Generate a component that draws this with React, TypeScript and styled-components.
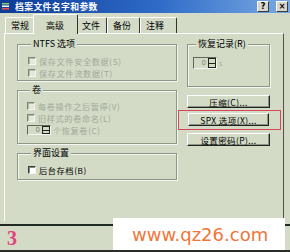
import React from "react";
import styled, { createGlobalStyle } from "styled-components";

const BG = "#d3dbc6";
const SHADE = "#8d9687";
const LIGHT = "#f4f7ef";
const DIM = "#a2a99a";
const DARK = "#2e362e";
const CJK = `"Noto Sans CJK SC", "DejaVu Sans", sans-serif`;

const GlobalStyle = createGlobalStyle`
    html, body { margin: 0; padding: 0; }
    body { width: 290px; height: 252px; overflow: hidden; background: ${BG}; }
`;

const Window = styled.div`
    position: relative;
    width: 290px;
    height: 252px;
    display: flex;
    flex-direction: column;
    background: ${BG};
    font-family: ${CJK};
    font-size: 9px;
    overflow: hidden;
`;

const TitleBar = styled.div`
    height: 13px;
    flex: none;
    display: flex;
    align-items: center;
    gap: 5px;
    padding: 0 2px 0 1px;
    background: linear-gradient(to right, #0c3a98, #2f6cc8 55%, #7aa9e3);
    color: #fff;
`;

const TitleText = styled.span`
    flex: 1;
    font-size: 8.8px;
    letter-spacing: 0.4px;
    font-weight: 700;
    line-height: 13px;
`;

const TitleButton = styled.span`
    width: 10px;
    height: 9px;
    display: flex;
    align-items: center;
    justify-content: center;
    margin-left: 2px;
    background: #d8d6ce;
    border: 1px solid;
    border-color: #fff #3a3a3a #3a3a3a #fff;
    color: #000;
    font-family: "DejaVu Sans", sans-serif;
    font-size: 8px;
    font-weight: 700;
    line-height: 9px;
`;

const TabStrip = styled.div`
    height: 20px;
    flex: none;
    display: flex;
    align-items: flex-end;
    padding-left: 5px;
`;

const Tab = styled.div<{ $w: number; $active?: boolean }>`
    position: relative;
    width: ${(p) => p.$w}px;
    height: ${(p) => (p.$active ? 20 : 16)}px;
    margin: ${(p) => (p.$active ? "0 -2px -1px -2px" : "0")};
    z-index: ${(p) => (p.$active ? 1 : 0)};
    box-sizing: border-box;
    padding-left: ${(p) => (p.$active ? 12 : 5)}px;
    padding-top: ${(p) => (p.$active ? 5 : 2)}px;
    border-top: 1px solid #fff;
    border-left: 1px solid #fff;
    border-right: 1px solid ${DARK};
    border-radius: 2px 2px 0 0;
    background: ${BG};
    line-height: 11px;
    color: #000;
`;

const Panel = styled.div`
    height: 188px;
    flex: none;
    box-sizing: border-box;
    margin: 0 6px 0 4px;
    display: flex;
    gap: 10px;
    padding: 5px 0 0 12px;
    border-top: 1px solid #fff;
    border-left: 1px solid #fff;
    border-right: 1px solid #4c544c;
`;

const Column = styled.div<{ $w: number }>`
    width: ${(p) => p.$w}px;
    display: flex;
    flex-direction: column;
`;

const Group = styled.fieldset<{ $top?: number; $pad: string }>`
    margin: ${(p) => p.$top ?? 0}px 0 0 0;
    padding: ${(p) => p.$pad};
    min-width: 0;
    border: 1px solid ${SHADE};
    box-shadow: inset 1px 1px 0 ${LIGHT}, 1px 1px 0 ${LIGHT};
    display: flex;
    flex-direction: column;
`;

const Legend = styled.legend`
    margin-left: 3px;
    padding: 0 2px;
    line-height: 10px;
    background: ${BG};
    color: #000;
`;

const CheckRow = styled.div<{ $dim?: boolean }>`
    height: 12px;
    display: flex;
    align-items: center;
    gap: 3px;
    font-size: 8.2px;
    letter-spacing: 0.6px;
    line-height: 12px;
    color: ${(p) => (p.$dim ? DIM : "#000")};
    white-space: nowrap;
`;

const Box = styled.span<{ $dim?: boolean }>`
    width: 8px;
    height: 8px;
    flex: none;
    box-sizing: border-box;
    border: 1px solid;
    border-color: ${(p) => (p.$dim ? "#7c8476" : "#3a423a")} ${LIGHT} ${LIGHT}
        ${(p) => (p.$dim ? "#7c8476" : "#3a423a")};
    box-shadow: inset 1px 1px 0 ${(p) => (p.$dim ? "#b4bbac" : "#808880")};
    background: ${(p) => (p.$dim ? "#e4e9dd" : "#fff")};
`;

const SpinRow = styled.div<{ $dim?: boolean; $h: number }>`
    height: ${(p) => p.$h}px;
    display: flex;
    align-items: center;
    gap: 2px;
    font-size: 8.2px;
    letter-spacing: 0.6px;
    line-height: ${(p) => p.$h}px;
    color: ${(p) => (p.$dim ? DIM : "#000")};
    white-space: nowrap;
`;

const SpinField = styled.span<{ $w: number; $h: number }>`
    width: ${(p) => p.$w}px;
    height: ${(p) => p.$h}px;
    flex: none;
    box-sizing: border-box;
    display: flex;
    align-items: center;
    border: 1px solid;
    border-color: #5e665a ${LIGHT} ${LIGHT} #5e665a;
    background: ${BG};
`;

const SpinValue = styled.span`
    flex: 1;
    text-align: right;
    padding-right: 2px;
    color: #7e8678;
    font-family: "DejaVu Sans", sans-serif;
    font-size: 7px;
    letter-spacing: 0;
    line-height: 8px;
`;

const SpinArrows = styled.span`
    width: 8px;
    height: 100%;
    flex: none;
    box-sizing: border-box;
    display: flex;
    flex-direction: column;
    border: 1px solid #1e241e;
`;

const SpinHalf = styled.span`
    flex: 1;
    border-bottom: 1px solid #1e241e;
    &:last-child { border-bottom: none; }
`;

const Unit = styled.span`
    font-size: 7px;
    color: ${DIM};
`;

const PushButton = styled.button<{ $mt?: number }>`
    display: block;
    width: 100%;
    height: 13px;
    margin-top: ${(p) => p.$mt ?? 0}px;
    padding: 0;
    box-sizing: border-box;
    border: 1px solid;
    border-color: #fff #1e241e #1e241e #fff;
    box-shadow: inset -1px -1px 0 ${SHADE};
    background: ${BG};
    font-family: ${CJK};
    font-size: 8.5px;
    letter-spacing: 0.4px;
    line-height: 10px;
    color: #000;
`;

const Highlight = styled.div`
    margin: 2px -11px 0 -9px;
    padding: 2px 11px 3px 9px;
    border: 1px solid #d84656;
`;

const Gap = styled.div<{ $h: number }>`
    height: ${(p) => p.$h}px;
    flex: none;
`;

const Rule = styled.div<{ $h: number; $c: string }>`
    height: ${(p) => p.$h}px;
    flex: none;
    background: ${(p) => p.$c};
`;

const Caption = styled.div`
    height: 24px;
    flex: none;
    display: flex;
    align-items: center;
    padding-left: 7px;
    font-family: "Liberation Serif", serif;
    font-weight: 700;
    font-size: 20px;
    color: #e2407a;
`;

const Watermark = styled.div`
    position: absolute;
    left: 113px;
    top: 218px;
    width: 172px;
    height: 32px;
    box-sizing: border-box;
    display: flex;
    align-items: flex-end;
    padding: 0 0 5px 19px;
    background: #fff;
    font-family: "DejaVu Sans", sans-serif;
    font-size: 18px;
    line-height: 20px;
    color: #ef763a;
`;

const AppIcon = () => (
    <svg width="9" height="9" viewBox="0 0 9 9">
        <rect x="0" y="0" width="9" height="9" fill="#1d3f8a" />
        <rect x="1" y="1" width="7" height="1.5" fill="#6fd070" />
        <rect x="1" y="3.5" width="7" height="1.5" fill="#ffffff" />
        <rect x="1" y="6" width="7" height="1.5" fill="#e05050" />
    </svg>
);

const Spinner = ({ w, h }: { w: number; h: number }) => (
    <SpinField $w={w} $h={h}>
        <SpinValue>0</SpinValue>
        <SpinArrows>
            <SpinHalf />
            <SpinHalf />
        </SpinArrows>
    </SpinField>
);

const tabs = [
    { label: "常规", w: 30 },
    { label: "高级", w: 45, active: true },
    { label: "文件", w: 31 },
    { label: "备份", w: 33 },
    { label: "注释", w: 37 },
];

const App = () => {
    return (
        <>
            <GlobalStyle />
            <Window>
                <TitleBar>
                    <AppIcon />
                    <TitleText>档案文件名字和参数</TitleText>
                    <TitleButton>?</TitleButton>
                    <TitleButton>×</TitleButton>
                </TitleBar>
                <TabStrip>
                    {tabs.map((t) => (
                        <Tab key={t.label} $w={t.w} $active={t.active}>
                            {t.label}
                        </Tab>
                    ))}
                </TabStrip>
                <Panel>
                    <Column $w={160}>
                        <Group $pad="6px 0 1px 10px">
                            <Legend>NTFS 选项</Legend>
                            <CheckRow $dim>
                                <Box $dim />
                                保存文件安全数据(S)
                            </CheckRow>
                            <CheckRow $dim>
                                <Box $dim />
                                保存文件流数据(T)
                            </CheckRow>
                        </Group>
                        <Group $top={4} $pad="5px 0 7px 9px">
                            <Legend>卷</Legend>
                            <CheckRow $dim>
                                <Box $dim />
                                每卷操作之后暂停(V)
                            </CheckRow>
                            <CheckRow $dim>
                                <Box $dim />
                                旧样式的卷命名(L)
                            </CheckRow>
                            <SpinRow $dim $h={12}>
                                <Spinner w={24} h={10} />
                                个恢复卷(C)
                            </SpinRow>
                        </Group>
                        <Group $top={4} $pad="6px 0 3px 10px">
                            <Legend>界面设置</Legend>
                            <CheckRow>
                                <Box />
                                后台存档(B)
                            </CheckRow>
                        </Group>
                    </Column>
                    <Column $w={83}>
                        <Group $pad="8px 0 17px 5px">
                            <Legend>恢复记录(R)</Legend>
                            <SpinRow $h={12}>
                                <Spinner w={24} h={12} />
                                <Unit>s</Unit>
                            </SpinRow>
                        </Group>
                        <PushButton $mt={8}>压缩(C)...</PushButton>
                        <Highlight>
                            <PushButton>SPX 选项(X)...</PushButton>
                        </Highlight>
                        <PushButton $mt={3}>设置密码(P)...</PushButton>
                    </Column>
                </Panel>
                <Gap $h={3} />
                <Rule $h={2} $c="#1f2a22" />
                <Caption>3</Caption>
                <Rule $h={2} $c="#2a2d2a" />
                <Watermark>www.qz26.com</Watermark>
            </Window>
        </>
    );
};

export default App;
